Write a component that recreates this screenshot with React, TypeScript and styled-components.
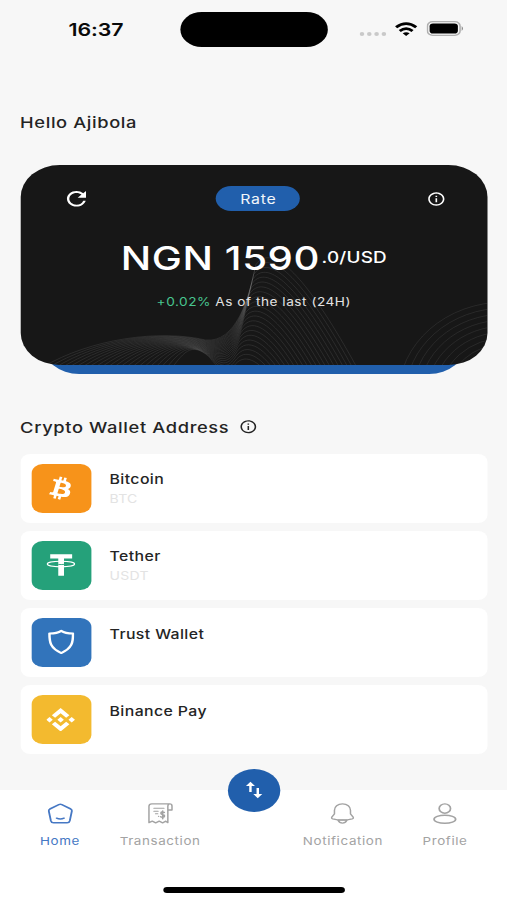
import React from "react";
import styled, { createGlobalStyle } from "styled-components";
import { FaBtc } from "react-icons/fa";
import { SiBinance } from "react-icons/si";
import { MdRefresh, MdInfoOutline } from "react-icons/md";

const GlobalStyle = createGlobalStyle`
  * { box-sizing: border-box; }
  body { margin: 0; background: #f7f7f7; overflow: hidden; }
`;

/* The phone layout is 416 units wide and is widened to fill the viewport. */
const Screen = styled.main`
  width: 416px;
  height: 900px;
  transform: scaleX(1.21875);
  transform-origin: 0 0;
  display: flex;
  flex-direction: column;
  background: #f7f7f7;
  color: #242424;
  font-family: Inter, "Liberation Sans", sans-serif;
  overflow: hidden;
`;

const StatusBar = styled.header`
  display: grid;
  grid-template-columns: 147.7px 121.4px 1fr;
  height: 59px;
  padding-top: 12px;
  align-items: start;
`;

const Clock = styled.time`
  padding-left: 56.3px;
  font-size: 17.5px;
  line-height: 35px;
  font-weight: 600;
  letter-spacing: -0.1px;
  color: #0a0a0a;
`;

const Island = styled.div`
  height: 35px;
  border-radius: 18px;
  background: #000;
`;

const StatusIcons = styled.div`
  display: flex;
  align-items: center;
  height: 34px;
  padding-left: 26px;
`;

const Dots = styled.svg`
  width: 22px;
  height: 4px;
  margin: 9px 7px 0 0;
`;

const Wifi = styled.svg`
  width: 18.5px;
  height: 14px;
  margin: -1px 7px 0 0;
`;

const Battery = styled.svg`
  width: 31px;
  height: 15px;
  margin-top: -1px;
`;

const Content = styled.div`
  flex: 1;
  padding: 0 15.6px 0 16.5px;
`;

const Greeting = styled.h1`
  margin: 52px 0 0;
  height: 24px;
  font-size: 15px;
  line-height: 24px;
  font-weight: 500;
  letter-spacing: 0.5px;
`;

const RateWrap = styled.section`
  position: relative;
  margin-top: 30px;
  height: 209px;
  z-index: 0;
  &::before {
    content: "";
    position: absolute;
    z-index: -1;
    inset: 100px 18px 0 18px;
    border-radius: 30px;
    background: #215fac;
  }
`;

const RateCard = styled.div`
  position: relative;
  height: 200px;
  border-radius: 32px;
  background: #171717;
  overflow: hidden;
  color: #fff;
`;

const Waves = styled.svg`
  position: absolute;
  inset: 0;
  width: 100%;
  height: 100%;
`;

const CardTop = styled.div`
  position: relative;
  display: flex;
  align-items: center;
  justify-content: space-between;
  height: 25px;
  margin-top: 21px;
  padding: 0 34.5px 0 34px;
`;

const Pill = styled.span`
  width: 69px;
  height: 25px;
  border-radius: 13px;
  background: #215fac;
  color: #f1f5fa;
  font-size: 13px;
  line-height: 26px;
  letter-spacing: 0.6px;
  text-align: center;
`;

const Price = styled.div`
  position: relative;
  display: flex;
  align-items: center;
  margin-top: 27px;
  height: 40px;
  padding-left: 82.6px;
  white-space: nowrap;
`;

const Amount = styled.span`
  font-size: 33px;
  line-height: 40px;
  font-weight: 500;
  letter-spacing: 0.5px;
`;

const Unit = styled.span`
  margin-left: 1.2px;
  font-size: 15.5px;
  line-height: 40px;
  font-weight: 500;
  letter-spacing: 0.15px;
`;

const Change = styled.p`
  position: relative;
  margin: 14px 0 0;
  height: 20px;
  padding-left: 112px;
  font-size: 11.2px;
  line-height: 20px;
  letter-spacing: 0.43px;
  color: #e4e4e4;
  white-space: nowrap;
`;

const Gain = styled.span`
  color: #48c58f;
`;

const SectionTitle = styled.h2`
  display: flex;
  align-items: center;
  gap: 8px;
  height: 24px;
  margin: 41px 0 15px;
  font-size: 15px;
  font-weight: 500;
  letter-spacing: 0.52px;
`;

const WalletList = styled.ul`
  display: flex;
  flex-direction: column;
  gap: 8px;
  margin: 0;
  padding: 0;
  list-style: none;
`;

const WalletRow = styled.li`
  display: flex;
  align-items: flex-start;
  height: 69.1px;
  padding: 10px 9.3px;
  gap: 15.3px;
  border-radius: 8px;
  background: #fff;
`;

const Tile = styled.div<{ $color: string }>`
  display: grid;
  place-items: center;
  width: 48.8px;
  height: 48.6px;
  border-radius: 9px;
  background: ${(p) => p.$color};
  color: #fff;
`;

const TiltedBitcoin = styled(FaBtc)`
  transform: rotate(14deg);
`;

const WalletText = styled.div`
  padding-top: 5.4px;
`;

const WalletName = styled.div`
  font-size: 13px;
  line-height: 20px;
  font-weight: 500;
  letter-spacing: 0.32px;
`;

const WalletCode = styled.div`
  font-size: 11.5px;
  line-height: 20px;
  letter-spacing: 0.2px;
  color: #e3e3e3;
`;

const TabBar = styled.nav`
  position: relative;
  display: grid;
  grid-template-columns: 98.4px 66px 84px 66px 1fr;
  height: 110px;
  padding-top: 13px;
  background: #fff;
`;

const Tab = styled.a<{ $active?: boolean }>`
  display: flex;
  flex-direction: column;
  align-items: center;
  color: ${(p) => (p.$active ? "#4678c4" : "#a3a3a3")};
  font-size: 11px;
  line-height: 16px;
  letter-spacing: 0.5px;
  white-space: nowrap;
  svg { margin-bottom: 8.5px; }
`;

const SwapButton = styled.button`
  position: absolute;
  top: -21.500px;
  left: 186.8px;
  width: 42.8px;
  height: 43px;
  padding: 0;
  border: 0;
  border-radius: 50%;
  background: #215fac;
  display: grid;
  place-items: center;
`;

const HomeIndicator = styled.div`
  position: absolute;
  left: 133.5px;
  bottom: 7.5px;
  width: 149.5px;
  height: 5.5px;
  border-radius: 3px;
  background: #000;
`;

const mix = (a: number[], b: number[], t: number) => a.map((v, i) => v + (b[i] - v) * t);

const OUTER = [22, 202, 70, 174, 138, 164, 185, 175, 215, 178, 228, 135, 235, 100, 250, 78, 282, 104, 336, 202];
const INNER = [150, 214, 168, 185, 172, 178, 188, 192, 200, 208, 204, 214, 212, 206, 222, 192, 236, 200, 246, 214];

const wavePath = (t: number) => {
  const p = mix(OUTER, INNER, t);
  return `M${p[0]} ${p[1]}C${p.slice(2, 8).join(" ")}C${p.slice(8, 14).join(" ")}C${p.slice(14, 20).join(" ")}`;
};

const CardWaves = () => (
  <Waves viewBox="0 0 468 200" preserveAspectRatio="none" fill="none" stroke="#fff" strokeWidth="0.9">
    {Array.from({ length: 22 }, (_, i) => (
      <path key={i} d={wavePath(i / 22)} opacity={0.1} />
    ))}
    {Array.from({ length: 10 }, (_, i) => (
      <ellipse key={i} cx="484" cy="230" rx={106 - i * 7} ry={93 - i * 6} opacity={0.09} />
    ))}
  </Waves>
);

const TetherLogo = () => (
  <svg width="24" height="24" viewBox="0 0 24 24" fill="none">
    <path d="M3.2 1.2h18v4.2h-6.7V22.8H9.8V5.4H3.2z" fill="#fff" />
    <ellipse cx="12" cy="11" rx="11.2" ry="2.7" stroke="#fff" strokeWidth="1" />
    <path d="M9.8 11.4c1.6.2 3.2.2 4.7 0" stroke="#25a17a" strokeWidth="0.8" />
  </svg>
);

const TrustLogo = () => (
  <svg width="22.5" height="26" viewBox="0 0 23 26" fill="none" stroke="#fff" strokeWidth="2.1" strokeLinejoin="round">
    <path d="M11.5 1.6C8.7 3.9 5.5 4.3 1.6 4.3c0 9 .6 15 9.9 20 9.3-5 9.9-11 9.9-20-3.9 0-7.1-.4-9.9-2.7z" />
  </svg>
);

const HomeIcon = () => (
  <svg width="21" height="21" viewBox="0 0 22 22" fill="none" stroke="currentColor" strokeWidth="1.6" strokeLinecap="round" strokeLinejoin="round">
    <path d="M9.7 1.7 2 6.3Q.8 7.1 1.1 8.5L2.9 18.8Q3.3 20.8 5.2 20.8H16.8Q18.7 20.8 19.1 18.8L20.9 8.5Q21.2 7.1 20 6.3L12.3 1.7Q11 1 9.7 1.7z" />
    <path d="M7.8 15.9q3.2 1.8 6.4 0" />
  </svg>
);

const ReceiptIcon = () => (
  <svg width="21" height="21" viewBox="0 0 24 22" preserveAspectRatio="none" fill="none" stroke="currentColor" strokeWidth="1.4" strokeLinejoin="round" strokeLinecap="round">
    <path d="M20.2 1H4Q1.4 1 1.4 3.5V20.6L4.5 19l3.2 1.8L11 19l3.2 1.8 3-1.8 1.9 1.6V3.5Q19.2 1 20.9 1 23 1 23 3.2V7.3h-3.9" />
    <path d="M6 5.4h9.5M6 8.6h4M7.5 11.2h2.2M10.3 14h.2" strokeWidth="1.1" />
    <path d="M15.8 9.9q-3-1.2-3.2.8c0 1.900 3.500.8 3.400 2.900-.2 1.900-2.700 1.600-3.700.8M14.300 8.300v8.200" strokeWidth="1.5" />
  </svg>
);

const BellIcon = () => (
  <svg width="20" height="21" viewBox="0 0 21 22" fill="none" stroke="currentColor" strokeWidth="1.3" strokeLinejoin="round">
    <path d="M10.5 1C6.3 1 3.6 3.9 3.6 7.7v3.6L1.3 14.8Q.7 16.2 2.1 16.7 10.5 19.3 18.9 16.7 20.3 16.2 19.7 14.8L17.4 11.3V7.7C17.4 3.9 14.7 1 10.5 1z" />
    <path d="M6.7 18q1.2 3 3.8 3t3.8-3q-3.8-.8-7.6 0z" />
  </svg>
);

const ProfileIcon = () => (
  <svg width="20" height="21" viewBox="0 0 21 22" fill="none" stroke="currentColor" strokeWidth="1.5">
    <circle cx="10.5" cy="5.8" r="4.9" />
    <ellipse cx="10.5" cy="17" rx="9.3" ry="4.2" />
  </svg>
);

const SwapIcon = () => (
  <svg width="15" height="18" viewBox="0 0 15 18" fill="none" stroke="#fff" strokeWidth="2">
    <path d="M4.5 11V3M10.5 7v8" />
    <path d="M.8 5 4.5.8 8.2 5zM6.8 13l3.7 4.2L14.2 13z" fill="#fff" stroke="none" />
  </svg>
);

const wallets = [
  { name: "Bitcoin", code: "BTC", color: "#f7931a", icon: <TiltedBitcoin size={22.5} /> },
  { name: "Tether", code: "USDT", color: "#25a17a", icon: <TetherLogo /> },
  { name: "Trust Wallet", code: "", color: "#3274bb", icon: <TrustLogo /> },
  { name: "Binance Pay", code: "", color: "#f3ba2f", icon: <SiBinance size={23.5} /> },
];

export default function App() {
  return (
    <>
      <GlobalStyle />
      <Screen>
        <StatusBar>
          <Clock>16:37</Clock>
          <Island />
          <StatusIcons>
            <Dots viewBox="0 0 22 4" fill="#c9c9c9">
              {[2, 8, 14, 20].map((x) => (
                <circle key={x} cx={x} cy="2" r="1.9" />
              ))}
            </Dots>
            <Wifi viewBox="0 0 18.5 14" fill="none" stroke="#000" strokeWidth="2.6">
              <path d="M1 5.2q8.25-7 16.5 0M4 8.9q5.25-4.4 10.5 0" />
              <path d="M6.4 11.3q2.85-2 5.7 0L9.25 14z" fill="#000" stroke="none" />
            </Wifi>
            <Battery viewBox="0 0 31 15" fill="none">
              <rect x="0.7" y="0.7" width="26.8" height="13.6" rx="4.3" stroke="#b0b0b0" strokeWidth="1.3" />
              <rect x="2.5" y="2.5" width="23.2" height="10" rx="2.8" fill="#000" />
              <path d="M28.8 5q2.2 2.5 0 5z" fill="#8a8a8a" />
            </Battery>
          </StatusIcons>
        </StatusBar>
        <Content>
          <Greeting>Hello Ajibola</Greeting>
          <RateWrap>
            <RateCard>
              <CardWaves />
              <CardTop>
                <MdRefresh size={23.5} />
                <Pill>Rate</Pill>
                <MdInfoOutline size={16} />
              </CardTop>
              <Price>
                <Amount>NGN 1590</Amount>
                <Unit>.0/USD</Unit>
              </Price>
              <Change>
                <Gain>+0.02%</Gain> As of the last (24H)
              </Change>
            </RateCard>
          </RateWrap>
          <SectionTitle>
            Crypto Wallet Address
            <MdInfoOutline size={15.5} />
          </SectionTitle>
          <WalletList>
            {wallets.map((w) => (
              <WalletRow key={w.name}>
                <Tile $color={w.color}>{w.icon}</Tile>
                <WalletText>
                  <WalletName>{w.name}</WalletName>
                  {w.code && <WalletCode>{w.code}</WalletCode>}
                </WalletText>
              </WalletRow>
            ))}
          </WalletList>
        </Content>
        <TabBar>
          <Tab $active><HomeIcon />Home</Tab>
          <Tab><ReceiptIcon />Transaction</Tab>
          <span />
          <Tab><BellIcon />Notification</Tab>
          <Tab><ProfileIcon />Profile</Tab>
          <SwapButton aria-label="Swap"><SwapIcon /></SwapButton>
          <HomeIndicator />
        </TabBar>
      </Screen>
    </>
  );
}
